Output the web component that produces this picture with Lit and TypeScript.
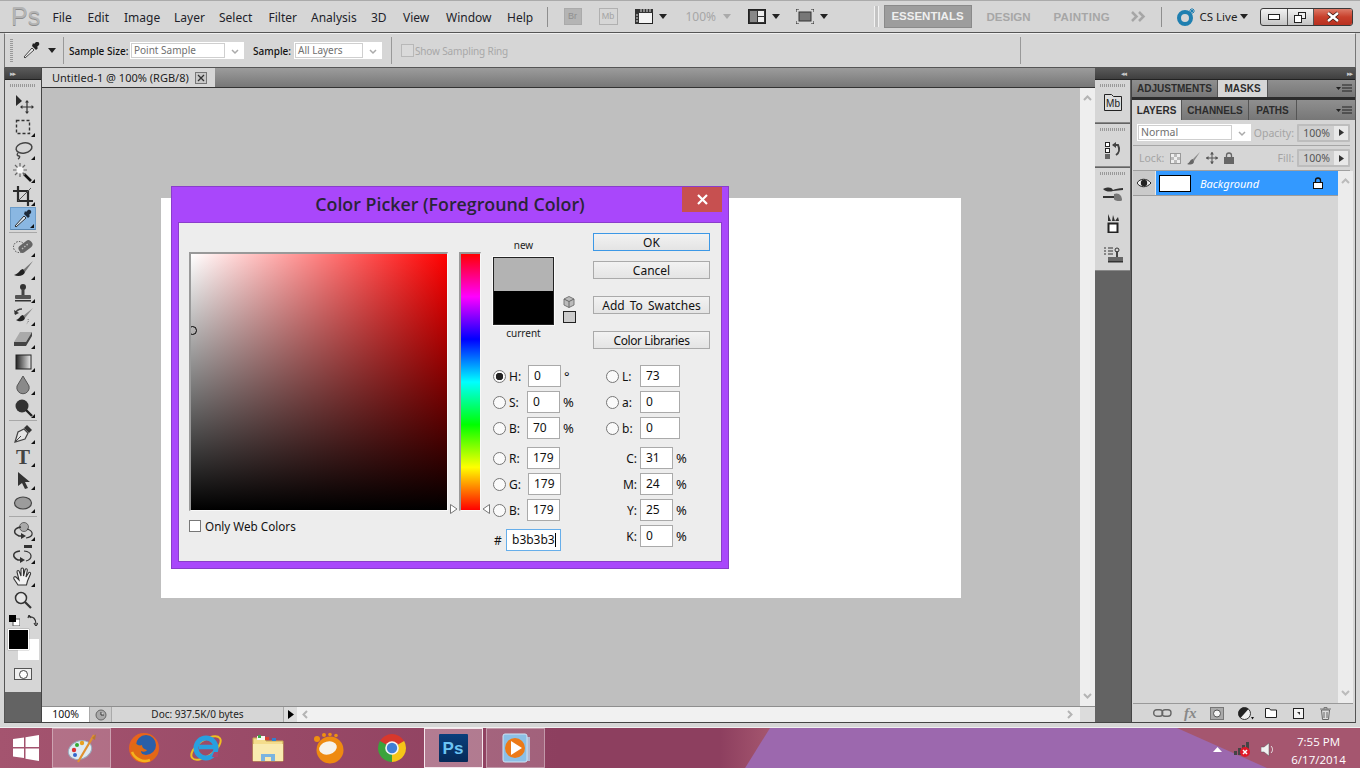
import { LitElement, html, css } from "lit";
import { customElement } from "lit/decorators.js";

// tool palette icons, 22x22 box
const toolIcons = {
  move: html`<svg width="22" height="22" viewBox="0 0 22 22"><path d="M4 2v11l6-5z" fill="#2b2b2b"/><path d="M15 9v10M10 14h10" stroke="#333" stroke-width="1.2"/><path d="M15 7l-2 2.4h4zM15 21l-2-2.4h4zM8 14l2.4-2v4zM22 14l-2.4-2v4z" fill="#333"/></svg>`,
  marquee: html`<svg width="22" height="22" viewBox="0 0 22 22"><rect x="4.5" y="4.5" width="13" height="13" fill="none" stroke="#333" stroke-width="1.4" stroke-dasharray="3 2"/></svg>`,
  lasso: html`<svg width="22" height="22" viewBox="0 0 22 22"><ellipse cx="12" cy="9" rx="8" ry="5" fill="none" stroke="#444" stroke-width="1.5" transform="rotate(-10 12 9)"/><path d="M6 14c-2 2 0 3 1 3s1 2-1 3" fill="none" stroke="#444" stroke-width="1.4"/></svg>`,
  wand: html`<svg width="22" height="22" viewBox="0 0 22 22"><path d="M12 12l7 7" stroke="#111" stroke-width="2.6"/><path d="M8 1v14M1 8h14M3 3l10 10M13 3L3 13" stroke="#666" stroke-width="1.2"/><circle cx="8" cy="8" r="3.5" fill="#f4f4f4"/></svg>`,
  crop: html`<svg width="22" height="22" viewBox="0 0 22 22"><path d="M6 1v15h15M1 6h15v15" fill="none" stroke="#2a2a2a" stroke-width="2.2"/><path d="M6 16L19 3" stroke="#555"/></svg>`,
  dropper: html`<svg width="22" height="22" viewBox="0 0 22 22"><path d="M4 19l-1-1 9-10 2 2z" fill="#dfeaf5" stroke="#333" stroke-width="1"/><path d="M12 6l4 4 2-2-1-1 2-2c1-2-1-4-3-3l-2 2-1-1z" fill="#1d2a3a"/></svg>`,
  heal: html`<svg width="22" height="22" viewBox="0 0 22 22"><circle cx="7" cy="11" r="5.5" fill="none" stroke="#444" stroke-dasharray="1.4 1.4"/><rect x="6" y="6.5" width="15" height="8" rx="3.5" transform="rotate(-38 13.5 10.5)" fill="#666"/><path d="M10 13l7-6" stroke="#bbb" stroke-width="1.4" stroke-dasharray="1.5 1.5"/></svg>`,
  brush: html`<svg width="22" height="22" viewBox="0 0 22 22"><path d="M21 2L11 11l2 2z" fill="#777"/><path d="M11 10c-3 0-3 4-9 6 4 2 10 1 11-3z" fill="#222"/></svg>`,
  stamp: html`<svg width="22" height="22" viewBox="0 0 22 22"><circle cx="11" cy="5" r="3" fill="#333"/><rect x="9.5" y="7" width="3" height="7" fill="#444"/><rect x="3" y="13" width="16" height="4" rx="1" fill="#555"/><rect x="3" y="18" width="16" height="1.5" fill="#333"/></svg>`,
  history: html`<svg width="22" height="22" viewBox="0 0 22 22"><path d="M21 3L11 11l2 2z" fill="#888"/><path d="M11 10c-3 0-3 4-7 5 3 2 8 2 9-2z" fill="#222"/><path d="M3 9c1-3 4-5 7-5" fill="none" stroke="#444" stroke-width="1.4"/><path d="M2 5l1 5 4-2z" fill="#333"/><path d="M16 14c1 2 0 4-2 5" fill="none" stroke="#777" stroke-dasharray="1 1"/></svg>`,
  eraser: html`<svg width="22" height="22" viewBox="0 0 22 22"><path d="M8 4h12l-6 10H2z" fill="#aaa"/><path d="M2 14h12v4H2zM14 14l6-10v4l-6 10z" fill="#444"/></svg>`,
  gradient: html`<svg width="22" height="22" viewBox="0 0 22 22"><defs><linearGradient id="tg"><stop offset="0" stop-color="#222"/><stop offset="1" stop-color="#eee"/></linearGradient></defs><rect x="4" y="4" width="15" height="14" fill="url(#tg)" stroke="#222"/></svg>`,
  blur: html`<svg width="22" height="22" viewBox="0 0 22 22"><path d="M11 2l6 10a6.2 6.2 0 1 1-12 0z" fill="#8a8a8a" stroke="#555"/></svg>`,
  burn: html`<svg width="22" height="22" viewBox="0 0 22 22"><circle cx="10" cy="9" r="6.5" fill="#333"/><path d="M14 13l6 6" stroke="#222" stroke-width="2.4"/></svg>`,
  pen: html`<svg width="22" height="22" viewBox="0 0 22 22"><path d="M3 19l3-10 6-3 4 4-3 6z" fill="#e4e4e4" stroke="#444" stroke-width="1.2"/><path d="M3 19l6-6" stroke="#444"/><path d="M12 5l3-3 5 5-3 3z" fill="#333"/></svg>`,
  type: html`<svg width="22" height="22" viewBox="0 0 22 22"><text x="11" y="18" text-anchor="middle" font-family="Liberation Serif" font-weight="700" font-size="21" fill="#444">T</text></svg>`,
  path: html`<svg width="22" height="22" viewBox="0 0 22 22"><path d="M6 3v14l4-3 3 6 3-1-3-6h5z" fill="#333"/></svg>`,
  ellipse: html`<svg width="22" height="22" viewBox="0 0 22 22"><ellipse cx="11" cy="11" rx="8.5" ry="6" fill="#9c9c9c" stroke="#444" stroke-width="1.2"/></svg>`,
  rotate3d: html`<svg width="22" height="22" viewBox="0 0 22 22"><circle cx="12" cy="7" r="4.5" fill="#aaa" stroke="#666"/><path d="M9 7C2 8 0 13 7 16l4 0" fill="none" stroke="#333" stroke-width="1.5"/><path d="M15 9c7 2 7 8-1 9" fill="none" stroke="#333" stroke-width="1.2"/><path d="M9 13l5 3-5 3z" fill="#333"/></svg>`,
  camera3d: html`<svg width="22" height="22" viewBox="0 0 22 22"><rect x="12" y="2" width="8" height="3" fill="#333"/><path d="M8 8C0 9 0 14 6 17h4" fill="none" stroke="#333" stroke-width="1.5"/><path d="M12 8c9 1 9 8 2 10" fill="none" stroke="#333" stroke-width="1.2"/><path d="M8 14l5 3-5 3z" fill="#333"/></svg>`,
  hand: html`<svg width="22" height="22" viewBox="0 0 22 22"><path d="M6 19L2 13c-1-2 1-3 2-2l3 3-2-8c0-2 2-2 2.5 0L9 10V3.500c0-2 2.500-2 2.500 0V10l1.500-6c.5-2 2.500-1.500 2.300.5L14 11l2.500-4c1-1.500 2.500-.5 2 1l-3 7-1 4z" fill="#f2f2f2" stroke="#333" stroke-width="1.1"/></svg>`,
  zoom: html`<svg width="22" height="22" viewBox="0 0 22 22"><circle cx="9" cy="9" r="5.5" fill="#e6e6e6" stroke="#333" stroke-width="1.5"/><path d="M13 13l6 6" stroke="#333" stroke-width="2.2"/></svg>`,
};

type Tool = { icon: keyof typeof toolIcons; more?: boolean; on?: boolean } | { sep: number };
const tools: Tool[] = [
  { icon: "move" },
  { icon: "marquee", more: true },
  { icon: "lasso", more: true },
  { icon: "wand", more: true },
  { icon: "crop", more: true },
  { icon: "dropper", more: true, on: true },
  { sep: 5 },
  { icon: "heal", more: true },
  { icon: "brush", more: true },
  { icon: "stamp", more: true },
  { icon: "history", more: true },
  { icon: "eraser", more: true },
  { icon: "gradient", more: true },
  { icon: "blur", more: true },
  { icon: "burn", more: true },
  { sep: 3 },
  { icon: "pen", more: true },
  { icon: "type", more: true },
  { icon: "path", more: true },
  { icon: "ellipse", more: true },
  { sep: 5 },
  { icon: "rotate3d", more: true },
  { icon: "camera3d", more: true },
  { icon: "hand", more: true },
  { icon: "zoom" },
];

const menus = ["File", "Edit", "Image", "Layer", "Select", "Filter", "Analysis", "3D", "View", "Window", "Help"];

const chevron = html`<svg class="chev" width="8" height="6" viewBox="0 0 8 6"><path d="M1 1l3 3 3-3" fill="none" stroke="#aaa" stroke-width="1.5"/></svg>`;
const arrowDown = html`<svg width="8" height="5" viewBox="0 0 8 5"><path d="M0 0h8L4 5z" fill="#222"/></svg>`;
const arrowDim = html`<svg width="8" height="5" viewBox="0 0 8 5"><path d="M0 0h8L4 5z" fill="#aaa"/></svg>`;
const panelMenu = html`<svg width="16" height="9" viewBox="0 0 16 9"><path d="M0 3h5L2.5 6z" fill="#222"/><path d="M6 1h10M6 4h10M6 7h10" stroke="#222" stroke-width="1.2"/></svg>`;
const grip = html`<div class="grip"></div>`;
const lockIcon = (fill: string, line: string) => html`<svg width="10" height="12" viewBox="0 0 10 12"><path d="M2.500 6V3.500a2.500 2.500 0 0 1 5 0V6" fill="none" stroke="${line}" stroke-width="1.3"/><rect x=".5" y="5.5" width="9" height="6" fill="${fill}" stroke="${line}"/></svg>`;

// taskbar logos
const logos = {
  palette: html`<svg width="30" height="30" viewBox="0 0 30 30"><ellipse cx="13" cy="17" rx="12" ry="9" fill="#dfeaf2" stroke="#9ab" transform="rotate(-20 13 17)"/><circle cx="7" cy="17" r="2.2" fill="#d33"/><circle cx="10" cy="12" r="2" fill="#3a3"/><circle cx="15" cy="10" r="2.2" fill="#e8a020"/><circle cx="8" cy="22" r="2" fill="#36c"/><path d="M11 29L27 2" stroke="#e09030" stroke-width="2.2"/><path d="M25 5l4-4 -1 6z" fill="#b87830"/></svg>`,
  firefox: html`<svg width="32" height="32" viewBox="0 0 32 32"><circle cx="16" cy="16" r="15" fill="#e8641b"/><circle cx="18" cy="13" r="10" fill="#2a5fa8"/><path d="M3 14c1 10 9 17 18 15 7-2 10-8 9-14-1 6-6 10-11 9-4 0-6-3-6-5 2 1 5 1 6-1-3-1-5-2-5-5-2 1-6 0-7-3-2 1-4 2-4 4z" fill="#e06a14"/><path d="M4 20c3 7 11 11 18 8" fill="none" stroke="#f5b21e" stroke-width="2.5"/></svg>`,
  ie: html`<svg width="32" height="32" viewBox="0 0 32 32"><ellipse cx="16" cy="16" rx="17" ry="8" fill="none" stroke="#f0c020" stroke-width="2" transform="rotate(-35 16 16)"/><circle cx="16" cy="16" r="10" fill="none" stroke="#28a0e0" stroke-width="5"/><path d="M9 15h15" stroke="#28a0e0" stroke-width="4.5"/><path d="M24 20h4v5h-6z" fill="#a84870"/></svg>`,
  folder: html`<svg width="32" height="30" viewBox="0 0 32 30"><path d="M1 5h11l2 3h17v20H1z" fill="#f4dc8c" stroke="#c8a850"/><path d="M5 3h8v4H5z" fill="#f8f8f0"/><rect x="6" y="2" width="3" height="3" fill="#38a848"/><rect x="13" y="4" width="4" height="3" fill="#d84030"/><rect x="20" y="5" width="4" height="3" fill="#3080d0"/><path d="M1 11h30v17H1z" fill="#f9eab0"/><path d="M9 28v-7h14v7h-4v-4h-6v4z" fill="#7ab4e0"/></svg>`,
  gom: html`<svg width="32" height="32" viewBox="0 0 32 32"><circle cx="16" cy="18" r="13.5" fill="#ee8a10"/><circle cx="3" cy="7" r="3" fill="#f09010"/><circle cx="10" cy="3" r="2" fill="#f09010"/><circle cx="16" cy="2.5" r="1.8" fill="#f09010"/><circle cx="22" cy="3.5" r="1.8" fill="#f09010"/><ellipse cx="14" cy="16" rx="9" ry="6.5" fill="#f6f2ea" transform="rotate(-15 14 16)"/></svg>`,
  chrome: html`<svg width="28" height="28" viewBox="0 0 28 28"><path d="M14 14L1.880 7A14 14 0 0 1 26.120 7z" fill="#d8382c"/><path d="M14 14L26.120 7A14 14 0 0 1 14 28z" fill="#f5c518"/><path d="M14 14V28A14 14 0 0 1 1.880 7z" fill="#3ba33c"/><circle cx="14" cy="14" r="6.8" fill="#f4f4f4"/><circle cx="14" cy="14" r="5.2" fill="#3f7fd6"/></svg>`,
  ps: html`<svg width="29" height="28" viewBox="0 0 29 28"><defs><linearGradient id="psg" x1="0" y1="0" x2="0" y2="1"><stop offset="0" stop-color="#0a3f7c"/><stop offset="1" stop-color="#062a58"/></linearGradient></defs><rect width="29" height="28" rx="1" fill="url(#psg)"/><text x="14" y="20" text-anchor="middle" font-family="Liberation Sans" font-weight="700" font-size="17" fill="#6cc4f4">Ps</text></svg>`,
  wmp: html`<svg width="28" height="30" viewBox="0 0 28 30"><rect x="6" y="4" width="22" height="24" fill="#b8d0e8" opacity=".8"/><rect x="1" y="1" width="24" height="28" rx="2" fill="#8cc0e6" stroke="#d0e4f4"/><circle cx="13" cy="15" r="10" fill="#ec7a18"/><path d="M9 8l11 7-11 7z" fill="#fff"/></svg>`,
};

@customElement("app-root")
export class AppRoot extends LitElement {
  static override styles = css`
    :host {
      display: block;
      position: relative;
      width: 1360px;
      height: 768px;
      overflow: hidden;
      font-family: "Noto Sans", "DejaVu Sans", sans-serif;
      font-size: 11px;
      color: #1c1c1c;
      background: #a5566f;
    }
    svg { display: block; }

    .win {
      height: 728px;
      background: #d6d6d6;
      border-top: 1px solid #aaa;
      display: flex;
      flex-direction: column;
      box-sizing: border-box;
      padding-bottom: 4px;
      border-bottom: 1px solid #f0f0f0;
    }

    /* menu bar: tracks are the x deltas of each item */
    .menubar {
      height: 32px;
      flex: none;
      box-sizing: border-box;
      padding-left: 11px;
      display: grid;
      align-items: center;
      grid-template-columns:
        41.5px 35px 36.5px 50px 45px 49.5px 42.5px 60px 32px 43px 61px 39.5px
        17px 35px 36px 24px 27px 37px 25px 24px 24px 24px 54px
        10px 88px 15px 67px 77px 30px 15px 24px 40px 20px auto;
      border-bottom: 1px solid #555;
    }
    .ps-mark {
      font-family: "Liberation Sans", sans-serif;
      font-size: 25px;
      font-weight: 400;
      color: #b4b4b4;
      text-shadow: 0 1px 0 #8c8c8c;
      line-height: 1;
    }
    .menu { font-size: 12px; color: #221f2a; padding-top: 2px; }
    .vsep { width: 1px; height: 20px; background: #8e8e8e; }
    .dbl { width: 3px; height: 21px; border-left: 1px solid #f2f2f2; border-right: 1px solid #f2f2f2; background: #c4c4c4; }
    .zoomval { color: #a6a6a6; font-size: 12px; }
    .mini {
      width: 16px; height: 15px; font-size: 9px; color: #999; text-align: center; line-height: 15px;
      font-family: "Liberation Sans", sans-serif;
    }
    .br { background: #b4b4b4; border: 1px solid #aaa; color: #8f8f8f; }
    .mb { width: 17px; border: 1px solid #b0b0b0; background: transparent; color: #a4a4a4; }
    .wsbtn {
      font-family: "Liberation Sans", sans-serif;
      font-weight: 700;
      font-size: 11.5px;
      color: #a6a6a6;
    }
    .wsbtn.paint { letter-spacing: 0.3px; }
    .wsbtn.on {
      box-sizing: border-box;
      height: 23px;
      line-height: 21px;
      width: 88px;
      text-align: center;
      background: #9d9d9d;
      border: 1px solid #8a8a8a;
      color: #efefef;
    }
    .cslive { font-size: 11.5px; color: #222; }
    .winctl {
      display: flex;
      height: 18px;
      width: 93px;
      box-sizing: border-box;
      border: 1px solid #3a3a3a;
      border-radius: 3px;
      overflow: hidden;
      background: linear-gradient(#f2f2f2, #c4c4c4);
    }
    .winctl > div { display: flex; align-items: center; justify-content: center; }
    .w1 { width: 26px; border-right: 1px solid #555; }
    .w2 { width: 25px; border-right: 1px solid #555; }
    .w3 { flex: 1; background: linear-gradient(#dc7a68, #c8402c 50%, #b83020); }

    /* options bar */
    .opts {
      height: 35px;
      flex: none;
      margin: 0 4px;
      box-sizing: border-box;
      border: 1px solid #777;
      border-top-color: #f0f0f0;
      border-bottom-color: #555;
      padding-left: 5px;
      display: grid;
      align-items: center;
      grid-template-columns: 13px 25px 15px 6px 61px 123px 41px 97px 10px 14px 605px auto;
    }
    .optgrip {
      width: 3px; height: 24px;
      background: repeating-linear-gradient(#999 0 1px, transparent 1px 2px);
    }
    .osep { width: 1px; height: 27px; background: #999; }
    .optlabel { font-size: 10px; color: #111; white-space: nowrap; font-weight: 500; }
    .sel {
      box-sizing: border-box;
      height: 17px;
      background: #fff;
      display: flex;
      align-items: center;
      padding: 1px;
      color: #707070;
    }
    .sel .inner {
      flex: 1;
      height: 100%;
      box-sizing: border-box;
      border: 1px solid #cfcfcf;
      padding-left: 2px;
      line-height: 13px;
      font-size: 10px;
      white-space: nowrap;
    }
    .sel .chev { margin: 2px 4px 0 6px; }
    .s1 { width: 114px; }
    .s2 { width: 88px; }
    .s3 { width: 114px; }
    .s3 .inner { font-size: 10.5px; }
    .cb { width: 11px; height: 11px; border: 1px solid #b8b8b8; background: #dadada; }
    .dim { color: #a8a8a8; font-size: 10px; letter-spacing: -0.15px; white-space: nowrap; }

    /* work area */
    .main {
      flex: 1;
      min-height: 0;
      margin: 0 4px;
      display: flex;
      border-bottom: 1px solid #444;
      border-left: 1px solid #555;
      border-right: 1px solid #555;
    }
    .hdr {
      height: 12px;
      flex: none;
      background: linear-gradient(#5a5a5a, #3e3e3e);
      display: flex;
      align-items: center;
      padding: 0 5px;
      color: #c8c8c8;
      font-size: 7px;
      letter-spacing: -1px;
      border-bottom: 1px solid #222;
      box-sizing: border-box;
    }
    .toolcol {
      width: 37px;
      flex: none;
      display: flex;
      flex-direction: column;
      background: #636363;
      border-right: 1px solid #444;
      box-sizing: border-box;
    }
    .toolbox {
      height: 612px;
      background: #d6d6d6;
      box-sizing: border-box;
      padding-top: 4px;
      display: flex;
      flex-direction: column;
      align-items: flex-start;
    }
    .grip {
      width: 26px;
      height: 3px;
      margin-left: 5px;
      background: repeating-linear-gradient(90deg, #999 0 1px, transparent 1px 2px);
      flex: none;
    }
    .tools { margin-top: 5px; display: flex; flex-direction: column; }
    .tool {
      position: relative;
      box-sizing: border-box;
      width: 26px;
      height: 23px;
      margin-left: 5px;
      display: flex;
      align-items: center;
      justify-content: center;
    }
    .tool.on { background: #8ab7e2; border: 1px solid #6c9cc9; border-bottom: 1px solid #5a86b0; }
    .tool.more::after {
      content: "";
      position: absolute;
      right: 1px;
      bottom: 1px;
      border-left: 4px solid transparent;
      border-bottom: 4px solid #111;
    }
    .tsep { box-sizing: border-box; margin-left: 4px; width: 28px; display: flex; align-items: center; }
    .tsep::before { content: ""; flex: 1; height: 1px; background: #a8a8a8; }
    .colors { margin: 1px 0 0 0; display: flex; flex-direction: column; }
    .minis { display: flex; align-items: center; height: 16px; gap: 7px; padding-left: 4px; }
    .swap { position: relative; height: 31px; margin-top: 1px; width: 36px; }
    .fg {
      position: absolute; left: 3px; top: 0; width: 19px; height: 19px;
      background: #000; border: 1px solid #fff; box-shadow: 0 0 1px #555;
    }
    .bg { position: absolute; left: 13px; top: 10px; width: 21px; height: 21px; background: #fff; }
    .qm {
      margin: 8px 0 0 9px; width: 16px; height: 10px;
      border: 1px solid #555; background: #f0f0f0; display: flex; align-items: center; justify-content: center;
    }
    .qm i { width: 7px; height: 7px; border: 1px solid #444; border-radius: 50%; background: #fff; }

    /* document */
    .doc { flex: 1; min-width: 0; display: flex; flex-direction: column; }
    .tabs {
      height: 20px;
      flex: none;
      background: linear-gradient(#9c9c9c, #777);
      border-bottom: 1px solid #333;
      box-sizing: border-box;
      display: flex;
    }
    .doctab {
      width: 173px;
      height: 19px;
      background: #d6d6d6;
      display: flex;
      align-items: center;
      padding-left: 10px;
      box-sizing: border-box;
      font-size: 11px;
      color: #222;
      white-space: nowrap;
    }
    .doctab .x {
      margin-left: 6px;
      width: 12px; height: 12px;
      border: 1px solid #777;
      background: #c8c8c8;
      box-sizing: border-box;
      display: flex; align-items: center; justify-content: center;
    }
    .center { flex: 1; min-height: 0; display: flex; }
    .stage {
      flex: 1;
      background: #bfbfbf;
      padding: 110px 0 0 119px;
      box-sizing: border-box;
      overflow: hidden;
    }
    .paper { width: 800px; height: 400px; background: #fff; }
    .vscroll {
      width: 15px;
      flex: none;
      background: #eeeeee;
      display: flex;
      flex-direction: column;
      justify-content: space-between;
      align-items: center;
      padding: 7px 0;
      box-sizing: border-box;
    }
    .status { height: 15px; flex: none; display: flex; background: #d6d6d6; align-items: stretch; border-top: 1px solid #8e8e8e; box-sizing: content-box; }
    .pct { width: 47px; background: #fff; text-align: center; line-height: 15px; font-size: 10.5px; color: #111; }
    .sticon { width: 23px; display: flex; align-items: center; justify-content: center; background: #ccc; border-left: 1px solid #aaa; border-right: 1px solid #aaa; box-sizing: border-box; }
    .stdoc { width: 171px; text-align: center; line-height: 15px; font-size: 10px; color: #222; }
    .starrow { width: 14px; background: #ddd; border-left: 1px solid #aaa; display: flex; align-items: center; justify-content: center; box-sizing: border-box; }
    .hscroll { flex: 1; background: #f1f1f1; display: flex; align-items: center; justify-content: space-between; padding: 0 7px 0 5px; }
    .corner { width: 15px; background: #dcdcdc; }

    /* dock + panels */
    .right { width: 260px; flex: none; display: flex; flex-direction: column; background: #636363; }
    .right .hdr { justify-content: space-between; padding: 0 3px 0 26px; }
    .rbody { flex: 1; min-height: 0; display: flex; }
    .dock { width: 36px; flex: none; display: flex; flex-direction: column; gap: 1px; }
    .dgroup {
      background: #d6d6d6;
      margin-right: 1px;
      padding: 4px 0 6px;
      display: flex;
      flex-direction: column;
      align-items: center;
      gap: 12px;
      border-bottom: 1px solid #888;
      box-sizing: border-box;
    }
    .dgroup .grip { margin-left: 0; }
    .d1 { height: 43px; gap: 7px; }
    .d2 { height: 43px; gap: 11px; }
    .d3 { height: 103px; }
    .d3 .last { margin-top: 2px; }
    .panels { flex: 1; min-width: 0; display: flex; flex-direction: column; background: #d6d6d6; border-left: 1px solid #444; box-sizing: border-box; }
    .ptabs {
      flex: none;
      display: flex;
      background: linear-gradient(#8f8f8f, #777);
      align-items: stretch;
      font-family: "Liberation Sans", sans-serif;
      font-weight: 700;
      font-size: 10px;
      color: #2c2c2c;
    }
    .pt1 { height: 17px; border-bottom: 3px solid #2c2c2c; box-sizing: content-box; }
    .pt2 { height: 20px; }
    .pt { display: flex; align-items: center; justify-content: center; border-right: 1px solid #555; box-sizing: border-box; }
    .pt1 .pt { padding-bottom: 1px; }
    .pt2 .pt { padding-top: 1px; }
    .pt.on { background: #d6d6d6; }
    .ptabs .pmenu { margin-left: auto; display: flex; align-items: center; padding-right: 3px; }
    .w86 { width: 86px; } .w50 { width: 50px; } .w67 { width: 67px; } .w48 { width: 48px; }
    .prow { display: flex; align-items: center; flex: none; margin-right: 5px; }
    .blend { height: 25px; border-bottom: 1px solid #a6a6a6; margin-left: 1px; padding-left: 4px; }
    .lockrow { height: 24px; border-bottom: 1px solid #a0a0a0; margin-left: 1px; padding-left: 6px; }
    .blend, .lockrow { box-shadow: 3px 0 0 #d6d6d6; }
    .numbox {
      width: 53px; height: 18px; margin-left: 3px; box-sizing: border-box;
      border: 2px solid #bdbdbd; background: #e8e8e8;
      display: flex; font-size: 10.5px; color: #555; border-radius: 1px;
    }
    .numbox span { flex: 1; background: #d0d0d0; text-align: center; line-height: 14px; }
    .numbox i { width: 14px; display: flex; align-items: center; justify-content: center; }
    .lockicons { display: flex; gap: 6px; align-items: center; margin-left: 6px; }
    .plabel { color: #a4a4a4; font-size: 10.5px; margin-left: auto; }
    .checker {
      width: 11px; height: 11px;
      background: conic-gradient(#bbb 25%, #eee 0 50%, #bbb 0 75%, #eee 0) 0 0 / 6px 6px;
      border: 1px solid #999;
      box-sizing: border-box;
    }
    .lbody { flex: 1; min-height: 0; display: flex; margin-left: 1px; margin-right: 2px; border-bottom: 1px solid #999; }
    .llist { flex: 1; min-width: 0; }
    .layer { height: 25px; display: flex; border-bottom: 1px solid #9c9c9c; box-sizing: border-box; }
    .eye { width: 23px; flex: none; display: flex; align-items: center; justify-content: center; background: #cacaca; border-right: 1px solid #e8e8e8; box-sizing: border-box; }
    .lname {
      flex: 1;
      background: #3399ff;
      display: flex;
      align-items: center;
      padding: 0 15px 0 3px;
      color: #fff;
      font-style: italic;
      font-size: 11px;
    }
    .thumb { width: 32px; height: 17px; background: #fff; border: 1px solid #000; box-sizing: border-box; margin-right: 9px; }
    .lname svg { margin-left: auto; }
    .lscroll { width: 15px; flex: none; background: #ececec; display: flex; flex-direction: column; justify-content: space-between; align-items: center; padding: 7px 0; box-sizing: border-box; }
    .pfoot { height: 18px; flex: none; display: grid; align-items: center; padding-left: 21px; grid-template-columns: 31px 26px 28px 27px 28px 27px auto; margin-right: 2px; }
    .fx { font-family: "Liberation Serif", serif; font-style: italic; font-weight: 700; font-size: 15px; color: #888; line-height: 1; }

    /* floating dialog */
    .dlg {
      position: absolute;
      left: 171px;
      top: 186px;
      width: 558px;
      height: 383px;
      box-sizing: border-box;
      background: #a947fb;
      border: 1px solid #8a3dcb;
      display: flex;
      flex-direction: column;
      font-size: 12px;
      color: #111;
      font-family: "Noto Sans", "DejaVu Sans", sans-serif;
    }
    .dtitle {
      height: 35px;
      flex: none;
      box-sizing: border-box;
      padding-bottom: 2px;
      display: flex;
      align-items: center;
      justify-content: center;
      font-family: "Open Sans", sans-serif;
      font-size: 17.8px;
      font-weight: 600;
      color: #2a2438;
      position: relative;
    }
    .dclose {
      position: absolute;
      right: 6px;
      top: 0;
      width: 40px;
      height: 25px;
      background: #c75050;
      display: flex;
      align-items: center;
      justify-content: center;
    }
    .dbody {
      flex: 1;
      margin: 0 6px 6px;
      background: #ededed;
      border: 1px solid #8a3dcb;
      box-sizing: border-box;
      display: flex;
      padding: 10px 0 0 10px;
    }
    .fieldcol { margin-top: 19px; width: 259px; flex: none; }
    .field {
      position: relative;
      width: 259px;
      height: 259px;
      box-sizing: border-box;
      border-top: 2px solid #999;
      border-left: 2px solid #999;
      border-right: 1px solid #f8f8f8;
      border-bottom: 1px solid #f8f8f8;
      overflow: hidden;
      background: linear-gradient(to top, #000, transparent), linear-gradient(to right, #fff, #f00);
    }
    .marker { position: absolute; left: -3px; top: 72px; width: 7px; height: 7px; border: 1px solid #000; border-radius: 50%; }
    .webcols { display: flex; align-items: center; gap: 4px; margin-top: 7px; font-size: 11.7px; }
    .webcols i { width: 12px; height: 12px; border: 1px solid #777; background: #fff; box-sizing: border-box; }
    .huecol { position: relative; margin: 19px 0 0 11px; width: 22px; flex: none; }
    .hue {
      height: 259px;
      box-sizing: border-box;
      border-top: 2px solid #999;
      border-left: 2px solid #999;
      border-right: 1px solid #f8f8f8;
      border-bottom: 1px solid #f8f8f8;
      background: linear-gradient(#f00, #f0f 16.7%, #00f 33.3%, #0ff 50%, #0f0 66.7%, #ff0 83.3%, #f00);
    }
    .hl { position: absolute; left: -9px; top: 252px; }
    .hr { position: absolute; right: -9px; top: 252px; }
    .side { margin-left: 12px; display: flex; flex-direction: column; }
    .sidetop { height: 132px; display: flex; flex: none; }
    .swcol { flex: none; display: flex; flex-direction: column; align-items: center; width: 61px; }
    .swlab { font-size: 10px; line-height: 14px; color: #222; }
    .swlab.n { margin-top: 5px; margin-bottom: 5px; }
    .swlab.c { margin-top: 1px; }
    .sw { width: 61px; height: 68px; border: 1px solid #222; box-sizing: border-box; box-shadow: 0 0 0 1px #fafafa; background: linear-gradient(#b3b3b3 50%, #000 50%); }
    .gamut { width: 39px; flex: none; padding: 63px 0 0 9px; box-sizing: border-box; display: flex; flex-direction: column; gap: 3px; }
    .websw { width: 13px; height: 12px; background: #ccc; border: 1px solid #222; box-sizing: border-box; }
    .btns { width: 117px; flex: none; display: flex; flex-direction: column; }
    .btn {
      height: 18px;
      box-sizing: border-box;
      border: 1px solid #aaa;
      background: linear-gradient(#f2f2f2, #e4e4e4);
      text-align: center;
      line-height: 17px;
      font-size: 12px;
      color: #111;
    }
    .btn.ok { border-color: #3c98e6; }
    .b2 { margin-top: 10px; }
    .b3, .b4 { margin-top: 17px; }
    .b3 { word-spacing: 2px; }
    .b4 { letter-spacing: -0.4px; }
    .fields { display: flex; }
    .fc1 { width: 113px; flex: none; display: flex; flex-direction: column; }
    .fc2 { display: flex; flex-direction: column; }
    .r { height: 22px; margin-bottom: 4px; display: flex; align-items: center; flex: none; }
    .r.gap { margin-top: 4px; }
    .radio { width: 13px; height: 13px; flex: none; box-sizing: border-box; border: 1px solid #777; border-radius: 50%; background: #fafafa; }
    .radio.on { background: radial-gradient(circle, #222 0 3.5px, #fafafa 4px); }
    .lab { margin-left: 3px; width: 18px; font-size: 12px; color: #111; }
    .clab { width: 34px; text-align: right; padding-right: 3px; box-sizing: border-box; font-size: 12px; }
    .in {
      width: 33px; height: 22px;
      box-sizing: border-box;
      border: 1px solid #aaa;
      background: #fff;
      padding-left: 5px;
      line-height: 20px;
      font-size: 12px;
      color: #111;
    }
    .in.nudge { margin-left: 1px; }
    .in.wide { width: 40px; }
    .unit { margin-left: 3px; font-size: 13px; }
    .hash { padding-left: 1px; width: 12px; font-size: 12px; box-sizing: content-box; }
    .in.hex { width: 55px; border-color: #66aeea; padding-left: 5px; white-space: nowrap; }
    .in.hex b { display: inline-block; width: 1px; height: 14px; background: #000; vertical-align: -3px; }

    /* taskbar */
    .task {
      position: relative;
      height: 40px;
      display: flex;
      background: #a5566f;
      overflow: hidden;
    }
    .task::before {
      content: "";
      position: absolute;
      inset: 0;
      background: #9c68ae;
      clip-path: polygon(770px 0, 1177px 0, 1267px 40px, 745px 40px);
    }
    .task::after {
      content: "";
      position: absolute;
      inset: 0;
      background: linear-gradient(90deg, #a4546f 0, #8d3f5f 560px, #8d3f5f 720px, transparent 770px);
      clip-path: polygon(0 0, 770px 0, 745px 40px, 0 40px);
    }
    .task > * { position: relative; z-index: 1; }
    .start { width: 52px; flex: none; display: flex; align-items: center; justify-content: center; }
    .apps { display: flex; gap: 3px; }
    .app { width: 59px; display: flex; align-items: center; justify-content: center; box-sizing: border-box; border: 1px solid transparent; }
    .app.open { background: rgba(255, 255, 255, 0.18); border-color: rgba(255, 255, 255, 0.35); }
    .app.front { background: rgba(255, 255, 255, 0.3); border: 1px solid #f4e6ec; }
    .tray { margin-left: auto; display: flex; align-items: center; padding-top: 2px; box-sizing: border-box; }
    .tup { margin-right: 12px; }
    .tnet { margin-right: 10px; }
    .clock {
      width: 80px;
      padding: 4px 3px 0 0;
      box-sizing: border-box;
      margin-left: 5px;
      text-align: center;
      color: #fff;
      font-family: "Open Sans", sans-serif;
      font-size: 11.5px;
      line-height: 18px;
    }
  `;

  private _tool(t: Tool) {
    if ("sep" in t) return html`<div class="tsep" style="height:${t.sep}px"></div>`;
    return html`<div class="tool ${t.more ? "more" : ""} ${t.on ? "on" : ""}">${toolIcons[t.icon]}</div>`;
  }

  private _menubar() {
    return html`
      <div class="menubar">
        <div class="ps-mark">Ps</div>
        ${menus.map((m) => html`<div class="menu">${m}</div>`)}
        <div class="vsep"></div>
        <div class="mini br">Br</div>
        <div class="mini mb">Mb</div>
        <svg width="18" height="15" viewBox="0 0 18 15"><rect x=".5" y=".5" width="17" height="14" fill="#f4f4f4" stroke="#222"/><path d="M0 0h18v4H0zM0 0h4v15H0z" fill="#333"/><path d="M6 0v3M9 0v3M12 0v3M15 0v3M1 6h2M1 9h2M1 12h2" stroke="#ddd"/></svg>
        ${arrowDown}
        <div class="zoomval">100%</div>
        ${arrowDim}
        <svg width="18" height="15" viewBox="0 0 18 15"><rect x=".5" y=".5" width="17" height="14" fill="#333" stroke="#222"/><rect x="2" y="2" width="7" height="11" fill="#888"/><rect x="10" y="2" width="6" height="5" fill="#eee"/><rect x="10" y="8" width="6" height="5" fill="#eee"/></svg>
        ${arrowDown}
        <svg width="18" height="15" viewBox="0 0 18 15"><path d="M0 3V0h3M15 0h3v3M18 12v3h-3M3 15H0v-3" fill="none" stroke="#222"/><rect x="3" y="3" width="12" height="9" fill="#777" stroke="#333"/></svg>
        ${arrowDown}
        <div class="dbl"></div>
        <div class="wsbtn on">ESSENTIALS</div>
        <div></div>
        <div class="wsbtn">DESIGN</div>
        <div class="wsbtn paint">PAINTING</div>
        <svg width="16" height="11" viewBox="0 0 16 11"><path d="M1 1l4.500 4.500L1 10M8 1l4.500 4.500L8 10" fill="none" stroke="#a6a6a6" stroke-width="2.5"/></svg>
        <div class="vsep"></div>
        <svg width="20" height="20" viewBox="0 0 20 20"><circle cx="9" cy="11" r="6" fill="none" stroke="#1f7fb0" stroke-width="4"/><path d="M16 1v6M13 4h6M14 2l4 4M18 2l-4 4" stroke="#1f7fb0" stroke-width="1"/></svg>
        <div class="cslive">CS Live</div>
        ${arrowDown}
        <div class="winctl">
          <div class="w1"><svg width="12" height="6" viewBox="0 0 12 6"><rect x=".5" y=".5" width="11" height="5" fill="#fff" stroke="#222"/></svg></div>
          <div class="w2"><svg width="12" height="12" viewBox="0 0 12 12"><rect x="4.5" y="1.5" width="7" height="6" fill="#eee" stroke="#222"/><rect x=".5" y="4.5" width="7" height="7" fill="#fff" stroke="#222"/></svg></div>
          <div class="w3"><svg width="14" height="12" viewBox="0 0 14 12"><path d="M2 2l10 8M12 2L2 10" stroke="#3a1a14" stroke-width="4"/><path d="M2 2l10 8M12 2L2 10" stroke="#fff" stroke-width="2.5"/></svg></div>
        </div>
      </div>
    `;
  }

  private _options() {
    return html`
      <div class="opts">
        <div class="optgrip"></div>
        <svg width="17" height="17" viewBox="0 0 17 17"><path d="M2 16l-1-1 8-9 2 2z" fill="#eee" stroke="#444"/><path d="M9 4l4 4 2-2-1-1 2-2c1-2-1-4-3-3l-2 2-1-1z" fill="#222"/></svg>
        ${arrowDown}
        <div class="osep"></div>
        <div class="optlabel">Sample Size:</div>
        <div class="sel s1"><div class="inner">Point Sample</div>${chevron}</div>
        <div class="optlabel">Sample:</div>
        <div class="sel s2"><div class="inner">All Layers</div>${chevron}</div>
        <div class="osep"></div>
        <div class="cb"></div>
        <div class="dim">Show Sampling Ring</div>
        <div class="osep"></div>
      </div>
    `;
  }

  private _toolcol() {
    return html`
      <div class="toolcol">
        <div class="hdr">▸▸</div>
        <div class="toolbox">
          ${grip}
          <div class="tools">${tools.map((t) => this._tool(t))}</div>
          <div class="colors">
            <div class="minis">
              <svg width="11" height="11" viewBox="0 0 11 11"><rect x="4" y="4" width="7" height="7" fill="#fff" stroke="#555"/><rect width="7" height="7" fill="#000"/></svg>
              <svg width="11" height="11" viewBox="0 0 11 11"><path d="M2 2c4-1 7 2 7 7M1 3l1-3 2 3M7 8l2 3 2-3" fill="none" stroke="#333" stroke-width="1.2"/></svg>
            </div>
            <div class="swap"><div class="bg"></div><div class="fg"></div></div>
            <div class="qm"><i></i></div>
          </div>
        </div>
      </div>
    `;
  }

  private _doc() {
    return html`
      <div class="doc">
        <div class="tabs">
          <div class="doctab">Untitled-1 @ 100% (RGB/8)
            <span class="x"><svg width="8" height="8" viewBox="0 0 8 8"><path d="M1 1l6 6M7 1L1 7" stroke="#333" stroke-width="1.3"/></svg></span>
          </div>
        </div>
        <div class="center">
          <div class="stage"><div class="paper"></div></div>
          <div class="vscroll">
            <svg width="9" height="6" viewBox="0 0 9 6"><path d="M1 5l3.500-3.500L8 5" fill="none" stroke="#b4b4b4" stroke-width="2"/></svg>
            <svg width="9" height="6" viewBox="0 0 9 6"><path d="M1 1l3.500 3.500L8 1" fill="none" stroke="#b4b4b4" stroke-width="2"/></svg>
          </div>
        </div>
        <div class="status">
          <div class="pct">100%</div>
          <div class="sticon"><svg width="12" height="12" viewBox="0 0 12 12"><circle cx="6" cy="6" r="5" fill="#aaa" stroke="#666"/><path d="M6 3v3h3" fill="#eee" stroke="#333"/></svg></div>
          <div class="stdoc">Doc: 937.5K/0 bytes</div>
          <div class="starrow"><svg width="6" height="9" viewBox="0 0 6 9"><path d="M0 0l6 4.500L0 9z" fill="#000"/></svg></div>
          <div class="hscroll">
            <svg width="6" height="9" viewBox="0 0 6 9"><path d="M5 1L1.500 4.500 5 8" fill="none" stroke="#b4b4b4" stroke-width="2"/></svg>
            <svg width="6" height="9" viewBox="0 0 6 9"><path d="M1 1l3.500 3.500L1 8" fill="none" stroke="#b4b4b4" stroke-width="2"/></svg>
          </div>
          <div class="corner"></div>
        </div>
      </div>
    `;
  }

  private _dock() {
    return html`
      <div class="dock">
        <div class="dgroup d1">
          ${grip}
          <svg width="18" height="17" viewBox="0 0 18 17"><path d="M.5 .5h7l2 2h8v14H.5z" fill="#ddd" stroke="#222"/><text x="9" y="13" text-anchor="middle" font-family="Liberation Sans" font-size="10" fill="#222">Mb</text></svg>
        </div>
        <div class="dgroup d2">
          ${grip}
          <svg width="16" height="17" viewBox="0 0 16 17"><rect x=".5" y=".5" width="4" height="4" fill="#fff" stroke="#222"/><rect x=".5" y="6.5" width="4" height="4" fill="#fff" stroke="#222"/><rect y="12" width="5" height="5" fill="#666"/><path d="M8 3h5c2 4 1 8-2 10" fill="none" stroke="#444" stroke-width="2"/><path d="M7 3l4-3v6z" fill="#444"/></svg>
        </div>
        <div class="dgroup d3">
          ${grip}
          <svg width="20" height="15" viewBox="0 0 20 15"><path d="M0 2c5-2 8-2 10 1 2-1 6-2 10-2v2l-10 1C7 5 3 5 0 2z" fill="#333"/><path d="M0 10h11" stroke="#333" stroke-width="2"/><path d="M11 7c5-2 8 2 8 6 0 2-8 1-8-1z" fill="#777"/></svg>
          <svg width="16" height="19" viewBox="0 0 16 19"><path d="M3 0l3 7H3zM8 1l2 6H7zM13 3l1 4h-4z" fill="#333"/><rect x="3.5" y="9.5" width="9" height="9" fill="#fff" stroke="#222" stroke-width="2"/></svg>
          <svg class="last" width="20" height="16" viewBox="0 0 20 16"><path d="M1 1h2M5 1h5M1 4h2M5 4h5M1 7h2M5 7h5" stroke="#333"/><circle cx="14" cy="3" r="2" fill="none" stroke="#333"/><rect x="13" y="4" width="2" height="6" fill="#444"/><rect x="5" y="10" width="15" height="4" fill="#666"/><rect x="5" y="14" width="15" height="1.5" fill="#333"/></svg>
        </div>
      </div>
    `;
  }

  private _panels() {
    return html`
      <div class="panels">
        <div class="ptabs pt1">
          <div class="pt w86">ADJUSTMENTS</div>
          <div class="pt w50 on">MASKS</div>
          <div class="pmenu">${panelMenu}</div>
        </div>
        <div class="ptabs pt2">
          <div class="pt w50 on">LAYERS</div>
          <div class="pt w67">CHANNELS</div>
          <div class="pt w48">PATHS</div>
          <div class="pmenu">${panelMenu}</div>
        </div>
        <div class="prow blend">
          <div class="sel s3"><div class="inner">Normal</div>${chevron}</div>
          <div class="plabel">Opacity:</div>
          <div class="numbox"><span>100%</span><i><svg width="5" height="7" viewBox="0 0 5 7"><path d="M0 0l5 3.500L0 7z" fill="#333"/></svg></i></div>
        </div>
        <div class="prow lockrow">
          <span class="plabel" style="margin:0">Lock:</span>
          <div class="lockicons">
            <div class="checker"></div>
            <svg width="13" height="13" viewBox="0 0 13 13"><path d="M13 0L6 7l1 2z" fill="#888"/><path d="M6 7C3 7 3 11 0 12c3 1 7 1 7-3z" fill="#666"/></svg>
            <svg width="12" height="12" viewBox="0 0 12 12"><path d="M6 0v12M0 6h12" stroke="#555"/><path d="M6 0L4 2.500h4zM6 12L4 9.500h4zM0 6l2.500-2v4zM12 6L9.500 4v4z" fill="#555"/></svg>
            ${lockIcon("#666", "#666")}
          </div>
          <div class="plabel">Fill:</div>
          <div class="numbox"><span>100%</span><i><svg width="5" height="7" viewBox="0 0 5 7"><path d="M0 0l5 3.500L0 7z" fill="#333"/></svg></i></div>
        </div>
        <div class="lbody">
          <div class="llist">
            <div class="layer">
              <div class="eye"><svg width="14" height="10" viewBox="0 0 14 10"><path d="M0 5c3-5 10-5 14 0-4 5-11 5-14 0z" fill="#eee" stroke="#222"/><circle cx="7" cy="5" r="3.200" fill="#222"/></svg></div>
              <div class="lname"><div class="thumb"></div>Background ${lockIcon("#fff", "#111")}</div>
            </div>
          </div>
          <div class="lscroll">
            <svg width="9" height="6" viewBox="0 0 9 6"><path d="M1 5l3.500-3.500L8 5" fill="none" stroke="#bbb" stroke-width="2"/></svg>
            <svg width="9" height="6" viewBox="0 0 9 6"><path d="M1 1l3.500 3.500L8 1" fill="none" stroke="#bbb" stroke-width="2"/></svg>
          </div>
        </div>
        <div class="pfoot">
          <svg width="19" height="8" viewBox="0 0 19 8"><rect x=".7" y=".7" width="9" height="6.5" rx="3" fill="none" stroke="#666" stroke-width="1.4"/><rect x="9" y=".7" width="9" height="6.5" rx="3" fill="none" stroke="#666" stroke-width="1.4"/></svg>
          <div class="fx">fx</div>
          <svg width="14" height="13" viewBox="0 0 14 13"><rect x=".5" y=".5" width="13" height="12" fill="#aaa" stroke="#777"/><circle cx="7" cy="6.5" r="3.5" fill="#f4f4f4" stroke="#555"/></svg>
          <svg width="16" height="13" viewBox="0 0 16 13"><circle cx="6.5" cy="6.5" r="6" fill="#eee" stroke="#333"/><path d="M6.500 .5a6 6 0 0 0 -4 10.500l8-9a6 6 0 0 0 -4 -1.500z" fill="#222"/><path d="M13 10h3l-1.500 2.500z" fill="#111"/></svg>
          <svg width="12" height="10" viewBox="0 0 12 10"><path d="M.5 .5h4l1 1.500h6v7.500H.5z" fill="#fff" stroke="#222"/></svg>
          <svg width="11" height="11" viewBox="0 0 11 11"><rect x=".5" y=".5" width="10" height="10" fill="#f4f4f4" stroke="#222"/><path d="M4 4h3v3z" fill="#333"/></svg>
          <svg width="11" height="13" viewBox="0 0 11 13"><path d="M0 2h11M4 2V.5h3V2" stroke="#777" fill="none"/><path d="M1.500 3h8l-1 9.500h-6z" fill="#ddd" stroke="#666"/><path d="M4 5v6M7 5v6" stroke="#666"/></svg>
        </div>
      </div>
    `;
  }

  private _dialog() {
    const radio = (on = false) => html`<i class="radio ${on ? "on" : ""}"></i>`;
    const left = (label: string, val: string, unit: string, opts: { on?: boolean; gap?: boolean; nudge?: boolean } = {}) => html`
      <div class="r ${opts.gap ? "gap" : ""}">
        ${radio(opts.on)}<span class="lab">${label}</span>
        <div class="in ${opts.nudge ? "nudge" : ""}">${val}</div>
        <span class="unit">${unit}</span>
      </div>`;
    const lab = (label: string, val: string) => html`
      <div class="r">${radio()}<span class="lab">${label}</span><div class="in wide">${val}</div></div>`;
    const cmyk = (label: string, val: string, gap = false) => html`
      <div class="r ${gap ? "gap" : ""}"><span class="clab">${label}</span><div class="in">${val}</div><span class="unit">%</span></div>`;
    return html`
      <div class="dlg">
        <div class="dtitle">
          Color Picker (Foreground Color)
          <div class="dclose"><svg width="11" height="11" viewBox="0 0 11 11"><path d="M1 1l9 9M10 1l-9 9" stroke="#fff" stroke-width="2.2"/></svg></div>
        </div>
        <div class="dbody">
          <div class="fieldcol">
            <div class="field"><div class="marker"></div></div>
            <div class="webcols"><i></i>Only Web Colors</div>
          </div>
          <div class="huecol">
            <div class="hue"></div>
            <svg class="hl" width="8" height="10" viewBox="0 0 8 10"><path d="M.5 .5L7 5 .5 9.500z" fill="#fff" stroke="#777"/></svg>
            <svg class="hr" width="8" height="10" viewBox="0 0 8 10"><path d="M7.500 .5L1 5l6.500 4.500z" fill="#fff" stroke="#777"/></svg>
          </div>
          <div class="side">
            <div class="sidetop">
              <div class="swcol">
                <div class="swlab n">new</div>
                <div class="sw"></div>
                <div class="swlab c">current</div>
              </div>
              <div class="gamut">
                <svg width="12" height="12" viewBox="0 0 12 12"><path d="M6 .5l5 2.500v6l-5 2.500-5-2.500v-6z" fill="#bbb" stroke="#777"/><path d="M1 3l5 2.500L11 3M6 5.500v6" fill="none" stroke="#666"/></svg>
                <div class="websw"></div>
              </div>
              <div class="btns">
                <div class="btn ok">OK</div>
                <div class="btn b2">Cancel</div>
                <div class="btn b3">Add To Swatches</div>
                <div class="btn b4">Color Libraries</div>
              </div>
            </div>
            <div class="fields">
              <div class="fc1">
                ${left("H:", "0", "°", { on: true, nudge: true })}
                ${left("S:", "0", "%")}
                ${left("B:", "70", "%")}
                ${left("R:", "179", "", { gap: true })}
                ${left("G:", "179", "", { nudge: true })}
                ${left("B:", "179", "")}
                <div class="r gap"><span class="hash">#</span><div class="in hex">b3b3b3<b></b></div></div>
              </div>
              <div class="fc2">
                ${lab("L:", "73")}
                ${lab("a:", "0")}
                ${lab("b:", "0")}
                ${cmyk("C:", "31", true)}
                ${cmyk("M:", "24")}
                ${cmyk("Y:", "25")}
                ${cmyk("K:", "0")}
              </div>
            </div>
          </div>
        </div>
      </div>
    `;
  }

  private _taskbar() {
    return html`
      <div class="task">
        <div class="start">
          <svg width="26" height="26" viewBox="0 0 26 26"><path d="M0 4l11-1.500V12H0zM12.500 2.300L26 0v12H12.500zM0 13.500h11V23L0 21.500zM12.500 13.500H26V26l-13.500-2.300z" fill="#fff"/></svg>
        </div>
        <div class="apps">
          <div class="app open">${logos.palette}</div>
          <div class="app">${logos.firefox}</div>
          <div class="app">${logos.ie}</div>
          <div class="app">${logos.folder}</div>
          <div class="app">${logos.gom}</div>
          <div class="app">${logos.chrome}</div>
          <div class="app front">${logos.ps}</div>
          <div class="app open">${logos.wmp}</div>
        </div>
        <div class="tray">
          <svg class="tup" width="9" height="5" viewBox="0 0 9 5"><path d="M4.500 0L9 5H0z" fill="#fff"/></svg>
          <svg class="tnet" width="17" height="15" viewBox="0 0 17 15"><rect x="0" y="9" width="3" height="4" fill="#444"/><rect x="4" y="6" width="3" height="7" fill="#444"/><rect x="8" y="3" width="3" height="10" fill="#444"/><rect x="12" y="0" width="3" height="13" fill="#444"/><circle cx="11" cy="10" r="5" fill="#e01828"/><path d="M9 8l4 4M13 8l-4 4" stroke="#fff" stroke-width="1.5"/></svg>
          <svg width="14" height="15" viewBox="0 0 14 15"><path d="M0 5h3l5-4v13l-5-4H0z" fill="#f2f2f2" stroke="#555" stroke-width=".5"/><path d="M10 4c2 2 2 5 0 7" fill="none" stroke="#eee"/></svg>
          <div class="clock">7:55 PM<br />6/17/2014</div>
        </div>
      </div>
    `;
  }

  protected override render() {
    return html`
      <div class="win">
        ${this._menubar()} ${this._options()}
        <div class="main">
          ${this._toolcol()} ${this._doc()}
          <div class="right">
            <div class="hdr"><span>◂◂</span><span>▸▸</span></div>
            <div class="rbody">${this._dock()} ${this._panels()}</div>
          </div>
        </div>
      </div>
      ${this._taskbar()} ${this._dialog()}
    `;
  }
}
